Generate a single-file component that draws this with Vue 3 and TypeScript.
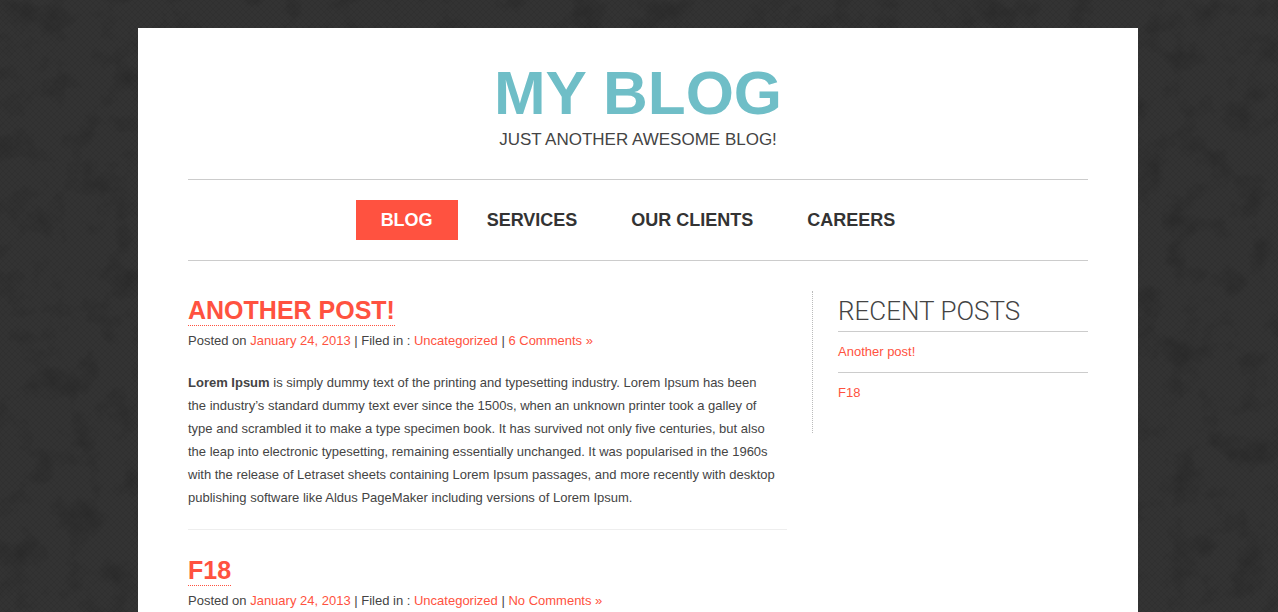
<script setup lang="ts">
interface NavItem {
  label: string
  active: boolean
}

interface Post {
  title: string
  date: string
  category: string
  comments: string
  lead: string
  lines: string[]
}

const nav: NavItem[] = [
  { label: 'BLOG', active: true },
  { label: 'SERVICES', active: false },
  { label: 'OUR CLIENTS', active: false },
  { label: 'CAREERS', active: false },
]

const posts: Post[] = [
  {
    title: 'ANOTHER POST!',
    date: 'January 24, 2013',
    category: 'Uncategorized',
    comments: '6 Comments »',
    lead: 'Lorem Ipsum',
    lines: [
      ' is simply dummy text of the printing and typesetting industry. Lorem Ipsum has been',
      'the industry’s standard dummy text ever since the 1500s, when an unknown printer took a galley of',
      'type and scrambled it to make a type specimen book. It has survived not only five centuries, but also',
      'the leap into electronic typesetting, remaining essentially unchanged. It was popularised in the 1960s',
      'with the release of Letraset sheets containing Lorem Ipsum passages, and more recently with desktop',
      'publishing software like Aldus PageMaker including versions of Lorem Ipsum.',
    ],
  },
  {
    title: 'F18',
    date: 'January 24, 2013',
    category: 'Uncategorized',
    comments: 'No Comments »',
    lead: '',
    lines: [],
  },
]

const recent: string[] = ['Another post!', 'F18']
</script>

<template>
  <div class="page">
    <svg class="texture" aria-hidden="true">
      <defs>
        <pattern id="weave" width="6" height="6" patternUnits="userSpaceOnUse">
          <path d="M0 0L6 6M6 0L0 6" stroke="#282828" stroke-width="1" opacity="0.25" />
        </pattern>
        <filter id="grunge" x="0" y="0" width="100%" height="100%" color-interpolation-filters="sRGB">
          <feTurbulence type="fractalNoise" baseFrequency="0.03" numOctaves="7" seed="8" />
          <feColorMatrix values="0 0 0 0 0.1  0 0 0 0 0.1  0 0 0 0 0.1  2 0 0 0 -1" />
        </filter>
      </defs>
      <rect width="100%" height="100%" fill="url(#weave)" />
      <rect width="100%" height="100%" filter="url(#grunge)" opacity="0.4" />
    </svg>

    <div class="paper">
      <header class="header">
        <h1 class="title">MY BLOG</h1>
        <p class="tagline">JUST ANOTHER AWESOME BLOG!</p>
      </header>

      <nav class="nav">
        <a
          v-for="item in nav"
          :key="item.label"
          href="#"
          class="nav-link"
          :class="{ active: item.active }"
        >{{ item.label }}</a>
      </nav>

      <div class="columns">
        <main class="posts">
          <article v-for="post in posts" :key="post.title" class="post">
            <h2 class="post-title"><a href="#">{{ post.title }}</a></h2>
            <p class="meta">
              Posted on <a href="#">{{ post.date }}</a> | Filed in :
              <a href="#">{{ post.category }}</a> | <a href="#">{{ post.comments }}</a>
            </p>
            <p v-if="post.lines.length" class="body">
              <strong>{{ post.lead }}</strong>
              <template v-for="(line, i) in post.lines" :key="i"><br v-if="i > 0">{{ line }}</template>
            </p>
          </article>
        </main>

        <aside class="sidebar">
          <h3 class="side-title">RECENT POSTS</h3>
          <ul class="recent">
            <li v-for="name in recent" :key="name"><a href="#">{{ name }}</a></li>
          </ul>
        </aside>
      </div>
    </div>
  </div>
</template>

<style>
body {
  margin: 0;
  background: #333;
}
</style>

<style scoped>
.page {
  position: relative;
  box-sizing: border-box;
  height: 100vh;
  overflow: hidden;
  padding: 28px 22px 0 20px;
  background: #333;
  color: #444;
  font-family: "Liberation Sans", Arial, sans-serif;
  font-size: 13px;
  line-height: 23px;
}

.texture {
  position: absolute;
  inset: 0;
  width: 100%;
  height: 100%;
}

.paper {
  position: relative;
  box-sizing: border-box;
  max-width: 1000px;
  min-height: 100%;
  margin: 0 auto;
  padding: 30px 50px;
  background: #fff;
}

h1,
h2,
h3,
p,
ul {
  margin: 0;
  padding: 0;
}

a {
  color: #ff5240;
  text-decoration: none;
}

.header {
  padding-bottom: 28px;
  border-bottom: 1px solid #ccc;
  text-align: center;
}

.title {
  color: #6fbec7;
  font-size: 62px;
  line-height: 70px;
}

.tagline {
  font-size: 17px;
}

.nav {
  display: flex;
  justify-content: center;
  gap: 4px;
  padding: 20px 0;
  border-bottom: 1px solid #ccc;
}

.nav-link {
  padding: 0 25px;
  color: #333;
  font-size: 18px;
  font-weight: bold;
  line-height: 40px;
}

.nav-link.active {
  background: #ff5240;
  color: #fff;
}

.columns {
  display: flex;
  align-items: flex-start;
  gap: 25px;
  padding-top: 30px;
}

.posts {
  flex: 1;
  min-width: 0;
}

.post {
  margin-bottom: 21px;
  padding-bottom: 20px;
  border-bottom: 1px solid #eee;
}

.post-title {
  display: flex;
  padding-top: 4px;
  font-size: 25px;
  line-height: 30px;
}

.post-title a {
  border-bottom: 1px dotted #ff5240;
}

.meta {
  margin-top: 3px;
}

.body {
  margin-top: 19px;
}

.sidebar {
  width: 250px;
  padding: 0 0 20px 25px;
  border-left: 1px dotted #bbb;
}

.side-title {
  font-family: Roboto, "Liberation Sans", sans-serif;
  font-size: 26px;
  font-weight: 300;
  line-height: 40px;
}

.recent {
  list-style: none;
}

.recent li {
  border-top: 1px solid #ccc;
  line-height: 40px;
}
</style>
